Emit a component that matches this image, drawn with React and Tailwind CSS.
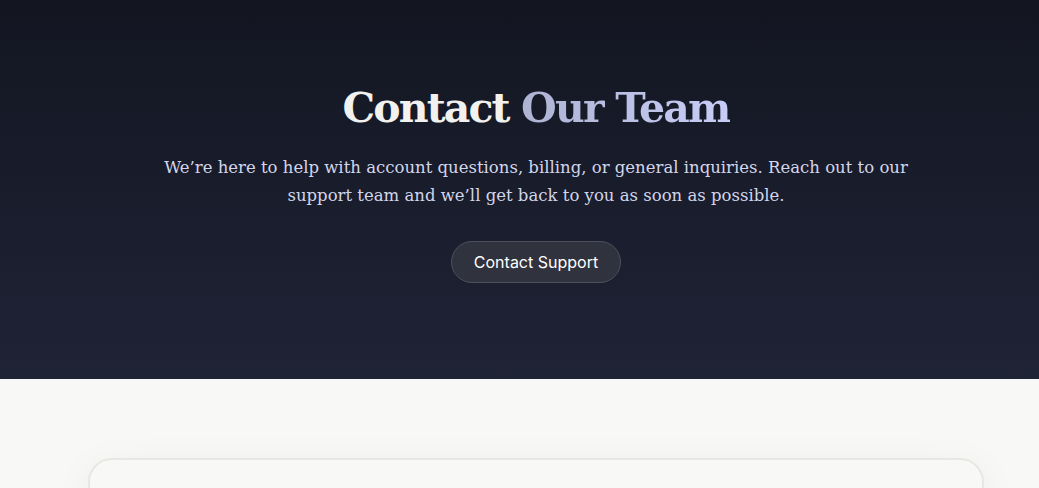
export default function App() {
    return (
        <div className="min-h-screen bg-[#f8f8f6] pl-[33px]">
            {/* Hero */}
            <section className="-ml-[33px] pl-[33px] h-[379px] bg-gradient-to-b from-[#131621] to-[#1f2336]">
                <div className="flex flex-col items-center pt-[84px] px-6">
                    <h1 className="text-[41px] leading-[48px] font-bold tracking-[-0.045em] text-[#f1f1ef] font-['DejaVu_Serif',serif]">
                        Contact{' '}
                        <span className="bg-gradient-to-r from-[#aeb3d2] to-[#c8cdf8] bg-clip-text text-transparent">Our Team</span>
                    </h1>
                    <p className="mt-[22px] max-w-[760px] text-center text-[16.5px] leading-[28px] text-[#d3d6ea] font-['DejaVu_Serif',serif]">
                        We’re here to help with account questions, billing, or general inquiries. Reach out to our support team and we’ll get back to you as soon as possible.
                    </p>
                    <button className="mt-[31px] h-[42px] px-[22px] rounded-full bg-[#30323e] border border-[#4d505c] text-white text-[16px] font-['Inter',sans-serif]">
                        Contact Support
                    </button>
                </div>
            </section>

            {/* Card */}
            <div className="pt-[79px] pb-10">
                <div className="mx-auto w-[896px] h-[200px] rounded-[24px] border-2 border-[#e7e7e3] bg-[#f8f8f6] shadow-[0_10px_40px_rgba(0,0,0,0.06)]"></div>
            </div>
        </div>
    )
}
